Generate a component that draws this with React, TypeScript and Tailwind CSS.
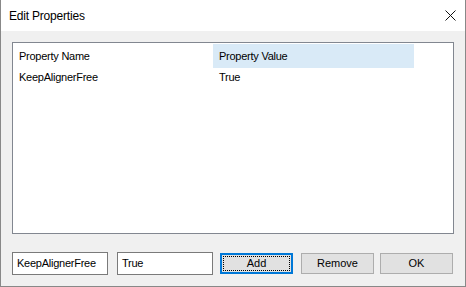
export default function App() {
  const rows = [{ name: "KeepAlignerFree", value: "True" }];

  return (
    <div
      className="w-[466px] h-[287px] flex flex-col border-x border-b border-[#888888] bg-[#f0f0f0] text-[11px] text-[#000000]"
      style={{ fontFamily: '"Liberation Sans", Arial, sans-serif' }}
    >
      {/* Title bar */}
      <div className="h-[31px] bg-white flex items-center justify-between pl-[8px] pr-[9px]">
        <span className="text-[12px] tracking-[-0.2px]">Edit Properties</span>
        <svg width="11" height="11" viewBox="0 0 11 11" className="mb-[1px]">
          <path d="M0.5 0.5 L10.5 10.5 M10.5 0.5 L0.5 10.5" stroke="#111" strokeWidth="1" fill="none" />
        </svg>
      </div>

      {/* Body */}
      <div className="flex-1 flex flex-col px-[11px] pt-[11px]">
        {/* List view */}
        <div className="h-[192px] border border-[#828790] bg-white pt-px">
          <div className="flex h-[24px] items-center">
            <div className="w-[200px] pl-[6px] tracking-[-0.25px]">Property Name</div>
            <div className="w-[201px] h-full flex items-center pl-[6px] bg-[#d9eaf7] tracking-[-0.25px]">
              Property Value
            </div>
          </div>
          {rows.map((r) => (
            <div key={r.name} className="flex h-[18px] items-center">
              <div className="w-[200px] pl-[6px] tracking-[-0.25px]">{r.name}</div>
              <div className="w-[201px] pl-[6px] tracking-[-0.25px]">{r.value}</div>
            </div>
          ))}
        </div>

        {/* Bottom controls */}
        <div className="mt-[18px] flex items-start">
          <div className="w-[96px] h-[23px] border border-[#7a7a7a] bg-white flex items-center pl-[4px] tracking-[-0.25px]">
            KeepAlignerFree
          </div>
          <div className="ml-[9px] w-[96px] h-[23px] border border-[#7a7a7a] bg-white flex items-center pl-[4px] tracking-[-0.25px]">
            True
          </div>
          <button className="ml-[7px] mt-px w-[73px] h-[21px] border-2 border-[#0078d7] bg-[#e1e1e1] p-px">
            <span className="flex w-full h-full items-center justify-center border border-dotted border-[#000000]">
              Add
            </span>
          </button>
          <button className="ml-[8px] mt-px w-[73px] h-[21px] border border-[#adadad] bg-[#e1e1e1] flex items-center justify-center">
            Remove
          </button>
          <button className="ml-[6px] mt-px w-[73px] h-[21px] border border-[#adadad] bg-[#e1e1e1] flex items-center justify-center">
            OK
          </button>
        </div>
      </div>
    </div>
  );
}
